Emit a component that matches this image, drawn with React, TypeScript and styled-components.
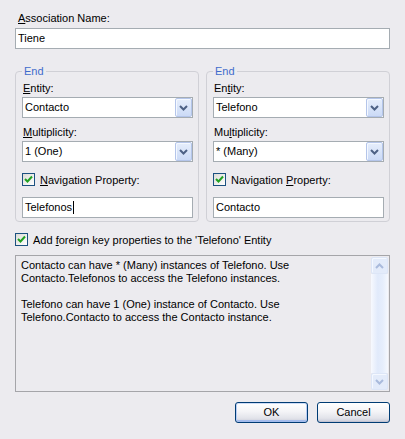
import React from 'react';
import styled, { createGlobalStyle } from 'styled-components';

const GlobalStyle = createGlobalStyle`
  html, body { margin: 0; padding: 0; background: #ecebef; }
  body { font-family: "Liberation Sans", Arial, sans-serif; font-size: 11px; color: #000; }
  u { text-decoration: underline; text-underline-offset: 1px; }
`;

const Dialog = styled.div`
  width: 405px;
  height: 439px;
  box-sizing: border-box;
  padding: 12px 15px 0 15px;
  display: flex;
  flex-direction: column;
`;

const Label = styled.div<{ $indent?: number; $mt?: number }>`
  height: 13px;
  line-height: 13px;
  padding-left: ${p => p.$indent ?? 0}px;
  margin-top: ${p => p.$mt ?? 0}px;
  white-space: nowrap;
`;

const TextBox = styled.div<{ $mt?: number }>`
  box-sizing: border-box;
  height: 21px;
  margin-top: ${p => p.$mt ?? 0}px;
  border: 1px solid #a5acb2;
  background: #fff;
  padding-left: 2px;
  line-height: 19px;
  display: flex;
  align-items: center;
`;

const Caret = styled.span`
  display: inline-block;
  width: 1px;
  height: 13px;
  background: #000;
  margin-left: 1px;
`;

const GroupRow = styled.div`
  display: flex;
  gap: 7px;
  margin-top: 15px;
`;

const Group = styled.fieldset`
  flex: 1;
  min-width: 0;
  margin: 0;
  padding: 4px 5px 3px 6px;
  border: 1px solid #d0d0d6;
  border-radius: 4px;
  display: flex;
  flex-direction: column;
`;

const Legend = styled.legend`
  padding: 0 2px;
  line-height: 14px;
  color: #3f6ccc;
`;

const Combo = styled.div<{ $mt?: number }>`
  box-sizing: border-box;
  height: 21px;
  margin-top: ${p => p.$mt ?? 0}px;
  border: 1px solid #a5acb2;
  background: #fff;
  display: flex;
  align-items: stretch;
`;

const ComboText = styled.div`
  flex: 1;
  padding-left: 2px;
  line-height: 19px;
`;

const DropButton = styled.div`
  width: 17px;
  box-sizing: border-box;
  border: 1px solid #b4c5ea;
  border-radius: 2px;
  background: linear-gradient(#e6eefc, #cbdaf6);
  box-shadow: inset 1px 1px 0 #f4f8ff;
  display: flex;
  align-items: center;
  justify-content: center;
`;

const CheckRow = styled.div<{ $mt?: number }>`
  display: flex;
  align-items: center;
  gap: 5px;
  height: 13px;
  margin-top: ${p => p.$mt ?? 0}px;
  white-space: nowrap;
`;

const CheckBox = styled.div`
  width: 13px;
  height: 13px;
  box-sizing: border-box;
  border: 1px solid #1c5180;
  background: linear-gradient(135deg, #dcdcd7, #ffffff);
  display: flex;
  align-items: center;
  justify-content: center;
  flex: none;
`;

const InfoBox = styled.div`
  box-sizing: border-box;
  height: 137px;
  margin-top: 9px;
  border: 1px solid #a5a5a9;
  background: #ecebef;
  display: flex;
`;

const InfoText = styled.div`
  flex: 1;
  padding: 3px 0 0 5px;
  line-height: 13px;
  white-space: pre;
`;

const ScrollBar = styled.div`
  width: 17px;
  margin: 1px 1px 1px 0;
  display: flex;
  flex-direction: column;
`;

const ScrollArrow = styled.div`
  width: 17px;
  height: 17px;
  box-sizing: border-box;
  border: 1px solid #dde6f7;
  border-radius: 2px;
  background: #e3ebfa;
  box-shadow: inset 1px 1px 0 #f4f8ff;
  display: flex;
  align-items: center;
  justify-content: center;
`;

const ScrollTrack = styled.div`
  flex: 1;
  background: linear-gradient(to right, #f7f9fe, #e1eafb 40%, #e6eefc 70%, #f5f8fe);
`;

const ButtonRow = styled.div`
  display: flex;
  justify-content: flex-end;
  gap: 9px;
  margin-top: 10px;
`;

const Button = styled.div<{ $default?: boolean }>`
  width: 73px;
  height: 21px;
  box-sizing: border-box;
  border: 1px solid #003c74;
  border-radius: 3px;
  background: linear-gradient(#ffffff, #f4f4f7 45%, #e2e3ea 80%, #c9cbd8);
  box-shadow: ${p =>
    p.$default
      ? 'inset 0 1px 0 #cedcf7, inset 1px 0 0 #b9cdf4, inset -1px 0 0 #b9cdf4, inset 0 -2px 0 #a4bcec'
      : 'inset 0 -1px 0 #c3c4d2'};
  display: flex;
  align-items: center;
  justify-content: center;
  line-height: 13px;
`;

const Chevron = ({ color }: { color: string }) => (
  <svg width="9" height="6" viewBox="0 0 9 6">
    <polyline points="1,1 4.5,4.5 8,1" fill="none" stroke={color} strokeWidth="2" />
  </svg>
);

const ChevronUp = ({ color }: { color: string }) => (
  <svg width="9" height="6" viewBox="0 0 9 6">
    <polyline points="1,5 4.5,1.5 8,5" fill="none" stroke={color} strokeWidth="2" />
  </svg>
);

const Check = () => (
  <svg width="9" height="9" viewBox="0 0 9 9">
    <polyline points="1,4 3.5,6.5 8,1.5" fill="none" stroke="#21a121" strokeWidth="2" />
  </svg>
);

const ComboBox = ({ value, mt }: { value: string; mt?: number }) => (
  <Combo $mt={mt}>
    <ComboText>{value}</ComboText>
    <DropButton>
      <Chevron color="#4d6185" />
    </DropButton>
  </Combo>
);

export default function App() {
  return (
    <>
      <GlobalStyle />
      <Dialog>
        <Label $indent={3}>
          <u>A</u>ssociation Name:
        </Label>
        <TextBox $mt={3}>Tiene</TextBox>
        <GroupRow>
          <Group>
            <Legend>End</Legend>
            <Label $indent={1}>
              <u>E</u>ntity:
            </Label>
            <ComboBox value="Contacto" mt={2} />
            <Label $indent={1} $mt={8}>
              <u>M</u>ultiplicity:
            </Label>
            <ComboBox value="1 (One)" mt={2} />
            <CheckRow $mt={11}>
              <CheckBox>
                <Check />
              </CheckBox>
              <span>
                <u>N</u>avigation Property:
              </span>
            </CheckRow>
            <TextBox $mt={11}>
              Telefonos
              <Caret />
            </TextBox>
          </Group>
          <Group>
            <Legend>End</Legend>
            <Label $indent={1}>
              En<u>t</u>ity:
            </Label>
            <ComboBox value="Telefono" mt={2} />
            <Label $indent={1} $mt={8}>
              Mu<u>l</u>tiplicity:
            </Label>
            <ComboBox value="* (Many)" mt={2} />
            <CheckRow $mt={11}>
              <CheckBox>
                <Check />
              </CheckBox>
              <span>
                Navigation <u>P</u>roperty:
              </span>
            </CheckRow>
            <TextBox $mt={11}>Contacto</TextBox>
          </Group>
        </GroupRow>
        <CheckRow $mt={11}>
          <CheckBox>
            <Check />
          </CheckBox>
          <span>
            Add <u>f</u>oreign key properties to the 'Telefono' Entity
          </span>
        </CheckRow>
        <InfoBox>
          <InfoText>
            {'Contacto can have * (Many) instances of Telefono. Use\nContacto.Telefonos to access the Telefono instances.\n\nTelefono can have 1 (One) instance of Contacto. Use\nTelefono.Contacto to access the Contacto instance.'}
          </InfoText>
          <ScrollBar>
            <ScrollArrow>
              <ChevronUp color="#a9badc" />
            </ScrollArrow>
            <ScrollTrack />
            <ScrollArrow>
              <Chevron color="#a9badc" />
            </ScrollArrow>
          </ScrollBar>
        </InfoBox>
        <ButtonRow>
          <Button $default>OK</Button>
          <Button>Cancel</Button>
        </ButtonRow>
      </Dialog>
    </>
  );
}
